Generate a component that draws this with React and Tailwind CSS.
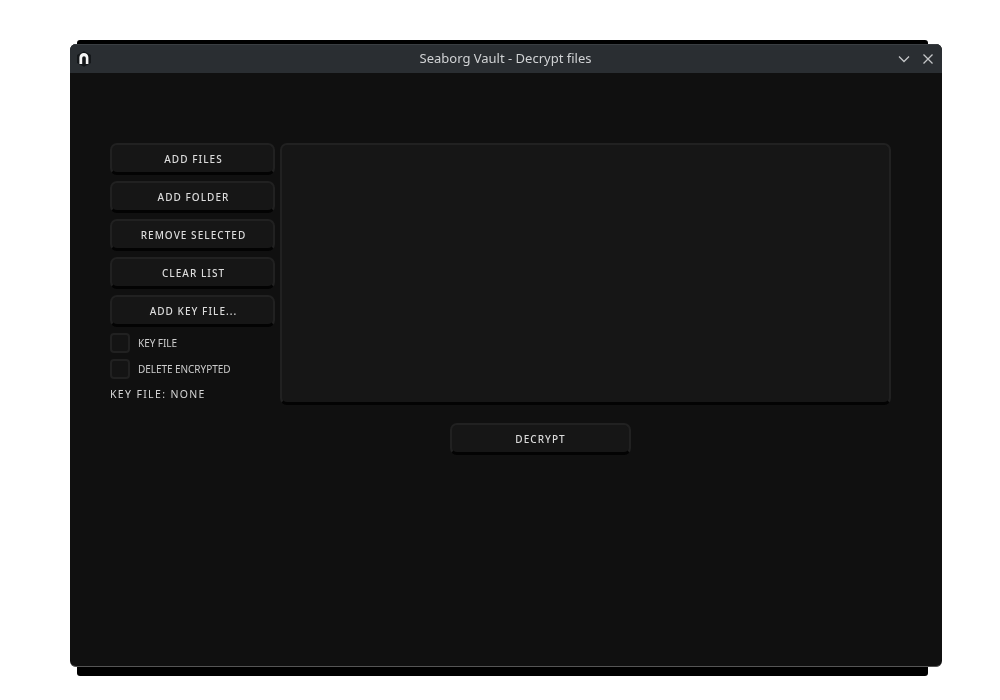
import React from 'react';

const ActionButton = ({ label, className = 'w-[165px] pl-[2px]' }) => (
  <button
    type="button"
    className={`${className} h-[32px] shrink-0 rounded-[7px] border-2 border-b-[3px] border-[#212121] border-b-[#030303] bg-[#161616] pt-[2px] text-[10px] font-medium tracking-[1.05px] text-[#dcdcdc]`}
  >
    {label}
  </button>
);

const CheckRow = ({ label }) => (
  <label className="flex h-5 items-center gap-2">
    <span className="h-5 w-5 rounded-[4px] border-2 border-[#212121] bg-[#141414]" />
    <span className="text-[10px] tracking-[-0.05px] text-[#cccccc]">{label}</span>
  </label>
);

const App = () => {
  return (
    <div className="h-[700px] w-[1000px] overflow-hidden bg-white pl-[70px] pt-11 font-['Noto_Sans',sans-serif]">
      <div className="relative h-[623px] w-[872px] will-change-transform">
        {/* black window shadow peeking out above and below */}
        <div className="absolute -top-1 left-[7px] h-[636px] w-[851px] rounded-[3px] bg-black" />

        <div className="relative flex h-full w-full flex-col overflow-hidden rounded-[6px] border-b border-[#555] bg-[#101010]">
          <div className="flex h-[29px] shrink-0 items-center border-t border-[#3a3e42] bg-[#2a2e32] pl-[6px] pr-[8px]">
            <svg width="16" height="16" viewBox="0 0 16 16" className="shrink-0">
              <path d="M8 0.2 15 4V12L8 15.8 1 12V4Z" fill="#14171a" />
              <path d="M3.4 13V6.5a4.5 4.5 0 0 1 9 0V13H9.8V7a1.8 1.8 0 0 0-3.6 0v6Z" fill="#f5f5f5" />
            </svg>
            <span className="ml-[21px] flex-1 text-center text-[13px] text-[#d0d2d4]">Seaborg Vault - Decrypt files</span>
            <div className="flex items-center gap-[12px]">
              <svg width="12" height="12" viewBox="0 0 12 12" fill="none" stroke="#c4c6c8" strokeWidth="1.3">
                <path d="M1 3.5 6 8.5 11 3.5" />
              </svg>
              <svg width="12" height="12" viewBox="0 0 12 12" fill="none" stroke="#c4c6c8" strokeWidth="1.3">
                <path d="M1.5 1.5 10.5 10.5M10.5 1.5 1.5 10.5" />
              </svg>
            </div>
          </div>

          <div className="flex flex-col pl-10 pt-[70px]">
            <div className="flex gap-[5px]">
              <div className="flex w-[165px] flex-col gap-[6px]">
                <ActionButton label="ADD FILES" />
                <ActionButton label="ADD FOLDER" />
                <ActionButton label="REMOVE SELECTED" />
                <ActionButton label="CLEAR LIST" />
                <ActionButton label="ADD KEY FILE..." />
                <div className="flex flex-col gap-[6px]">
                  <CheckRow label="KEY FILE" />
                  <CheckRow label="DELETE ENCRYPTED" />
                </div>
                <span className="pt-[2px] text-[10.5px] tracking-[1.35px] text-[#d4d4d4]">KEY FILE: NONE</span>
              </div>
              <div className="h-[262px] w-[611px] rounded-[7px] border-2 border-b-[3px] border-[#212121] border-b-[#030303] bg-[#161616]" />
            </div>
            <ActionButton label="DECRYPT" className="ml-[340px] mt-[18px] w-[181px]" />
          </div>
        </div>
      </div>
    </div>
  );
};

export default App;
